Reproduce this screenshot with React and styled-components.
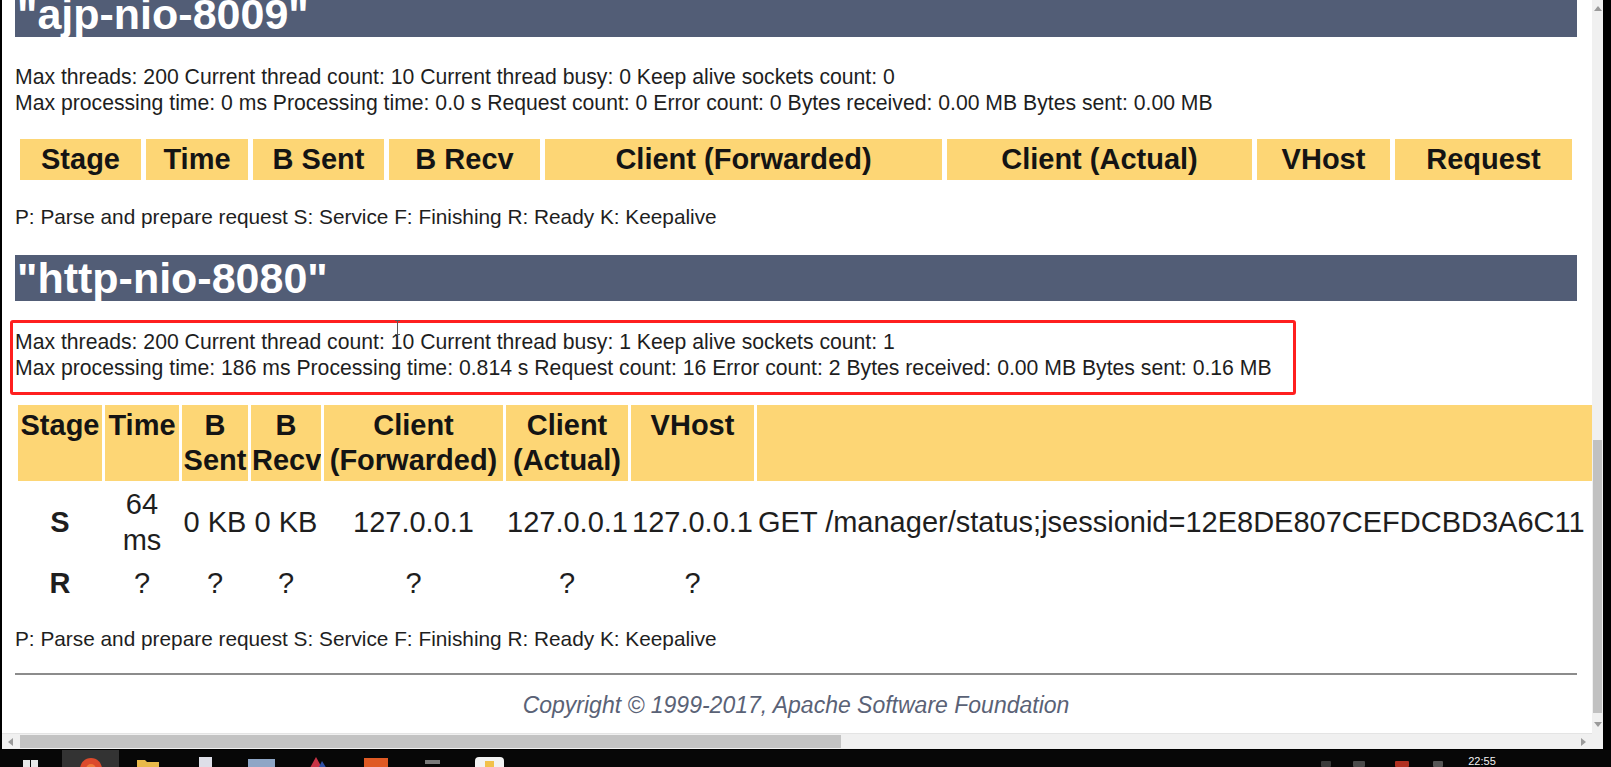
import React from 'react';
import styled, { createGlobalStyle } from 'styled-components';

const GlobalStyle = createGlobalStyle`
  html, body { margin: 0; padding: 0; background: #000; overflow: hidden; }
  #root { width: 1611px; height: 767px; }
`;

const FONT = `"Liberation Sans", Tahoma, Arial, sans-serif`;

const Screen = styled.div`
  width: 1611px;
  height: 767px;
  display: grid;
  grid-template-rows: 750px 17px;
  background: #000;
  overflow: hidden;
`;

const BrowserWindow = styled.div`
  margin-left: 2px;
  width: 1601px;
  height: 749px;
  display: grid;
  grid-template-columns: 1590px 11px;
  grid-template-rows: 733px 16px;
  background: #fff;
`;

const Viewport = styled.div`
  position: relative;
  overflow: hidden;
  background: #fff;
  font-family: ${FONT};
  color: #1e1e1e;
`;

const Page = styled.div`
  width: 1562px;
  padding: 0 13px;
  margin-top: -9px;
`;

const Heading = styled.h1`
  margin: ${p => p.$mt}px 0 0;
  height: 46px;
  padding-left: 2px;
  background: #525d76;
  color: #fff;
  font-size: 43px;
  line-height: 46px;
  font-weight: 700;
  white-space: nowrap;
`;

const Stats = styled.div`
  margin-top: ${p => p.$mt}px;
  font-size: 21.2px;
  line-height: 26px;
  white-space: nowrap;
`;

const StatsBox = styled.div`
  position: relative;
  margin: 19px 0 0 -5px;
  width: 1276px;
  padding: 6px 2px 11px 2px;
  border: 3px solid #ff1f1f;
  border-radius: 3px;
`;

const Cursor = styled.svg`
  position: absolute;
  left: 381px;
  top: -3px;
`;

const DataTable = styled.table`
  table-layout: fixed;
  border-collapse: separate;
  border-spacing: ${p => p.$hs}px ${p => p.$vs}px;
  width: ${p => p.$width}px;
  margin-top: ${p => p.$mt}px;
`;

const Col = styled.col`
  width: ${p => p.$w}px;
`;

const HeadCell = styled.th`
  background: #fdd675;
  color: #141414;
  font-size: 29px;
  line-height: 35px;
  font-weight: 700;
  padding: 3px 1px;
  text-align: center;
  vertical-align: top;
  overflow: hidden;
`;

const BodyCell = styled.td`
  font-size: 29px;
  line-height: 36px;
  padding: 2px 1px;
  color: #1e1e1e;
  text-align: ${p => p.$align || 'center'};
  vertical-align: middle;
  font-weight: ${p => (p.$bold ? 700 : 400)};
  white-space: ${p => (p.$nowrap ? 'nowrap' : 'normal')};
  overflow: hidden;
`;

const Legend = styled.p`
  margin: ${p => p.$mt}px 0 0;
  font-size: 20.8px;
  line-height: 26px;
  white-space: nowrap;
`;

const Rule = styled.hr`
  margin: 21px 0 0;
  border: none;
  height: 2px;
  background: #8c8c8c;
`;

const Copyright = styled.div`
  margin-top: 17px;
  text-align: center;
  font-style: italic;
  font-size: 23px;
  line-height: 26px;
  color: #5a6276;
`;

/* scrollbars */
const VScroll = styled.div`
  display: flex;
  flex-direction: column;
  background: #f0f0f0;
`;

const ArrowBox = styled.div`
  flex: none;
  width: ${p => p.$w || 11}px;
  height: ${p => p.$h || 17}px;
  display: flex;
  align-items: center;
  justify-content: center;
`;

const VTrack = styled.div`
  flex: 1;
`;

const VThumb = styled.div`
  margin: ${p => p.$offset}px 1px 0;
  height: ${p => p.$size}px;
  background: #c1c1c1;
`;

const HScroll = styled.div`
  display: flex;
  background: #f0f0f0;
  border-top: 1px solid #e4e4e4;
`;

const HTrack = styled.div`
  flex: 1;
  display: flex;
  align-items: stretch;
  padding: 1px 0;
`;

const HThumb = styled.div`
  margin-left: ${p => p.$offset}px;
  width: ${p => p.$size}px;
  background: #c3c3c3;
`;

const Corner = styled.div`
  background: #f0f0f0;
`;

/* taskbar */
const Taskbar = styled.div`
  display: flex;
  align-items: flex-start;
  height: 17px;
  background: #070707;
  overflow: hidden;
`;

const StartButton = styled.div`
  width: 62px;
  height: 17px;
  display: flex;
  justify-content: center;
  padding-top: 10px;
  box-sizing: border-box;
`;

const TaskButton = styled.div`
  width: 57px;
  height: 17px;
  display: flex;
  justify-content: center;
  padding-top: 7px;
  box-sizing: border-box;
  background: ${p => (p.$active ? '#333333' : 'transparent')};
`;

const Tray = styled.div`
  margin-left: auto;
  display: flex;
  align-items: flex-start;
  height: 17px;
`;

const TrayIcon = styled.div`
  width: ${p => p.$w}px;
  height: 6px;
  margin: 11px ${p => p.$gap}px 0 0;
  background: ${p => p.$c};
  border-radius: 1px;
`;

const Clock = styled.div`
  width: 42px;
  margin-right: 108px;
  padding-top: 5px;
  font-family: ${FONT};
  font-size: 11px;
  line-height: 12px;
  color: #f2f2f2;
  text-align: center;
`;

const COLUMNS = ['Stage', 'Time', 'B Sent', 'B Recv', 'Client (Forwarded)', 'Client (Actual)', 'VHost', 'Request'];
const WIDTHS_AJP = [121, 102, 131, 151, 397, 305, 133, 177];
const WIDTHS_HTTP = [84, 74, 66, 70, 179, 122, 123, 1800];

const ROWS_HTTP = [
  ['S', '64 ms', '0 KB', '0 KB', '127.0.0.1', '127.0.0.1', '127.0.0.1', 'GET /manager/status;jsessionid=12E8DE807CEFDCBD3A6C11'],
  ['R', '?', '?', '?', '?', '?', '?', ''],
];

const LEGEND = 'P: Parse and prepare request S: Service F: Finishing R: Ready K: Keepalive';

function WorkerTable({ widths, rows, hs, vs, width, mt }) {
  return (
    <DataTable $hs={hs} $vs={vs} $width={width} $mt={mt}>
      <colgroup>
        {widths.map((w, i) => <Col key={i} $w={w} />)}
      </colgroup>
      <thead>
        <tr>{COLUMNS.map(c => <HeadCell key={c}>{c}</HeadCell>)}</tr>
      </thead>
      <tbody>
        {rows.map((r, ri) => (
          <tr key={ri}>
            {r.map((v, ci) => (
              <BodyCell
                key={ci}
                $bold={ci === 0}
                $align={ci === 7 ? 'left' : 'center'}
                $nowrap={ci === 7}
              >
                {v}
              </BodyCell>
            ))}
          </tr>
        ))}
      </tbody>
    </DataTable>
  );
}

const Tri = ({ dir }) => {
  const pts = {
    up: '0,5 4,0 8,5',
    down: '0,0 8,0 4,5',
    left: '5,0 5,8 0,4',
    right: '0,0 0,8 5,4',
  }[dir];
  const vertical = dir === 'up' || dir === 'down';
  return (
    <svg width={vertical ? 8 : 5} height={vertical ? 5 : 8} viewBox={vertical ? '0 0 8 5' : '0 0 5 8'}>
      <polygon points={pts} fill="#9a9a9a" />
    </svg>
  );
};

const TASK_ICONS = [
  <svg key="a" width="24" height="24" viewBox="0 0 24 24"><circle cx="12" cy="12" r="11" fill="#dc4a2c" /><circle cx="12" cy="12" r="5" fill="#f07a3a" /></svg>,
  <svg key="b" width="24" height="24" viewBox="0 0 24 24"><path d="M1 3h8l2 2h12v17H1z" fill="#e9b949" /></svg>,
  <svg key="c" width="16" height="24" viewBox="0 0 16 24"><rect x="2" y="0" width="13" height="22" fill="#dedfe8" /></svg>,
  <svg key="d" width="28" height="24" viewBox="0 0 28 24"><rect x="0" y="2" width="27" height="20" fill="#8ea6c6" /></svg>,
  <svg key="e" width="26" height="24" viewBox="0 0 26 24"><polygon points="10,0 20,18 0,18" fill="#c83345" /><polygon points="16,4 26,20 8,20" fill="#2f4fa6" /></svg>,
  <svg key="f" width="28" height="24" viewBox="0 0 28 24"><rect x="2" y="1" width="24" height="21" fill="#df5a24" /></svg>,
  <svg key="g" width="16" height="24" viewBox="0 0 16 24"><rect x="0" y="3" width="15" height="4" fill="#7a7a7a" /></svg>,
  <svg key="h" width="30" height="24" viewBox="0 0 30 24"><rect x="0" y="0" width="29" height="22" rx="4" fill="#f2f2f2" /><rect x="10" y="4" width="9" height="8" fill="#f2c14a" /></svg>,
];

export default function App() {
  return (
    <>
      <GlobalStyle />
      <Screen>
        <BrowserWindow>
          <Viewport>
            <Page>
              <Heading $mt={0}>"ajp-nio-8009"</Heading>
              <Stats $mt={27}>
                <div>Max threads: 200 Current thread count: 10 Current thread busy: 0 Keep alive sockets count: 0</div>
                <div>Max processing time: 0 ms Processing time: 0.0 s Request count: 0 Error count: 0 Bytes received: 0.00 MB Bytes sent: 0.00 MB</div>
              </Stats>
              <WorkerTable widths={WIDTHS_AJP} rows={[]} hs={5} vs={3} width={1562} mt={20} />
              <Legend $mt={21}>{LEGEND}</Legend>

              <Heading $mt={25}>"http-nio-8080"</Heading>
              <StatsBox>
                <Stats $mt={0}>
                  <div>Max threads: 200 Current thread count: 10 Current thread busy: 1 Keep alive sockets count: 1</div>
                  <div>Max processing time: 186 ms Processing time: 0.814 s Request count: 16 Error count: 2 Bytes received: 0.00 MB Bytes sent: 0.16 MB</div>
                </Stats>
                <Cursor width="7" height="15" viewBox="0 0 7 15">
                  <path d="M1 0.5h5M3.5 0.5v14M1 14.5h5" stroke="#5a5a5a" strokeWidth="1" fill="none" />
                </Cursor>
              </StatsBox>
              <WorkerTable
                widths={WIDTHS_HTTP}
                rows={ROWS_HTTP}
                hs={3}
                vs={3}
                width={WIDTHS_HTTP.reduce((a, b) => a + b, 0) + 27}
                mt={7}
              />
              <Legend $mt={20}>{LEGEND}</Legend>
              <Rule />
              <Copyright>Copyright © 1999-2017, Apache Software Foundation</Copyright>
            </Page>
          </Viewport>

          <VScroll>
            <ArrowBox><Tri dir="up" /></ArrowBox>
            <VTrack><VThumb $offset={423} $size={273} /></VTrack>
            <ArrowBox><Tri dir="down" /></ArrowBox>
          </VScroll>

          <HScroll>
            <ArrowBox $w={17} $h={15}><Tri dir="left" /></ArrowBox>
            <HTrack><HThumb $offset={1} $size={821} /></HTrack>
            <ArrowBox $w={17} $h={15}><Tri dir="right" /></ArrowBox>
          </HScroll>
          <Corner />
        </BrowserWindow>

        <Taskbar>
          <StartButton>
            <svg width="16" height="16" viewBox="0 0 16 16">
              <rect x="0" y="0" width="7" height="7" fill="#e8e8e8" />
              <rect x="8" y="0" width="7" height="7" fill="#e8e8e8" />
              <rect x="0" y="8" width="7" height="7" fill="#e8e8e8" />
              <rect x="8" y="8" width="7" height="7" fill="#e8e8e8" />
            </svg>
          </StartButton>
          {TASK_ICONS.map((icon, i) => (
            <TaskButton key={i} $active={i === 0}>{icon}</TaskButton>
          ))}
          <Tray>
            <TrayIcon $w={10} $gap={22} $c="#3a3a3a" />
            <TrayIcon $w={12} $gap={30} $c="#4a4a4a" />
            <TrayIcon $w={14} $gap={24} $c="#b03020" />
            <TrayIcon $w={10} $gap={18} $c="#555" />
            <Clock>22:55<br />2018/1/1</Clock>
          </Tray>
        </Taskbar>
      </Screen>
    </>
  );
}
